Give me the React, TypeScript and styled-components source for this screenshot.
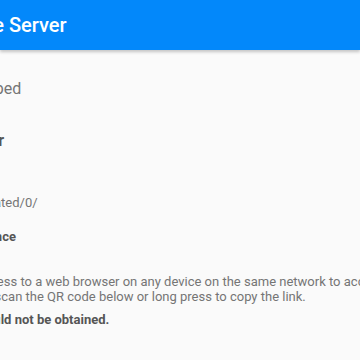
import styled, { createGlobalStyle } from "styled-components";

const GlobalStyle = createGlobalStyle`
	html, body {
		margin: 0;
		padding: 0;
		background: #fafafa;
	}
	body {
		font-family: Roboto, "Noto Sans", sans-serif;
	}
`;

const Screen = styled.div`
	width: 360px;
	height: 360px;
	overflow: hidden;
	background: #fafafa;
`;

const AppBar = styled.header`
	display: flex;
	align-items: center;
	height: 50px;
	background: #0388fa;
	box-shadow: 0 2px 3px rgba(0, 0, 0, 0.22);
	white-space: nowrap;
`;

const Title = styled.h1<{ $cut: number }>`
	margin: 0 0 0 ${p => -p.$cut}px;
	color: #ffffff;
	font-size: 20px;
	font-weight: 500;
`;

const Content = styled.main`
	display: flex;
	flex-direction: column;
	white-space: nowrap;
`;

// each row is clipped on the left, so it carries its own offset
const Line = styled.div<{ $cut: number; $top: number; $size: number; $bold?: boolean }>`
	margin: ${p => p.$top}px 0 0 ${p => -p.$cut}px;
	font-size: ${p => p.$size}px;
	line-height: 20px;
	font-weight: ${p => (p.$bold ? 700 : 400)};
	color: ${p => (p.$bold ? "#555555" : "#757575")};
`;

const Paragraph = styled.div`
	display: flex;
	flex-direction: column;
	margin-top: 27px;
	font-size: 13px;
	line-height: 15px;
	color: #757575;
`;

const ParagraphLine = styled.span<{ $cut: number }>`
	margin-left: ${p => -p.$cut}px;
`;

export default function App() {
	return (
		<Screen>
			<GlobalStyle />
			<AppBar>
				<Title $cut={28}>File Server</Title>
			</AppBar>
			<Content>
				<Line $cut={38} $top={29} $size={16}>Stopped</Line>
				<Line $cut={79} $top={32} $size={16} $bold>Root Folder</Line>
				<Line $cut={89} $top={42} $size={13}>/storage/emulated/0/</Line>
				<Line $cut={39} $top={14} $size={13} $bold>Guidance</Line>
				<Paragraph>
					<ParagraphLine $cut={87}>Enter this address to a web browser on any device on the same network to access the files.</ParagraphLine>
					<ParagraphLine $cut={22}>Or scan the QR code below or long press to copy the link.</ParagraphLine>
				</Paragraph>
				<Line $cut={86} $top={6} $size={13} $bold>IP address could not be obtained.</Line>
			</Content>
		</Screen>
	);
}
